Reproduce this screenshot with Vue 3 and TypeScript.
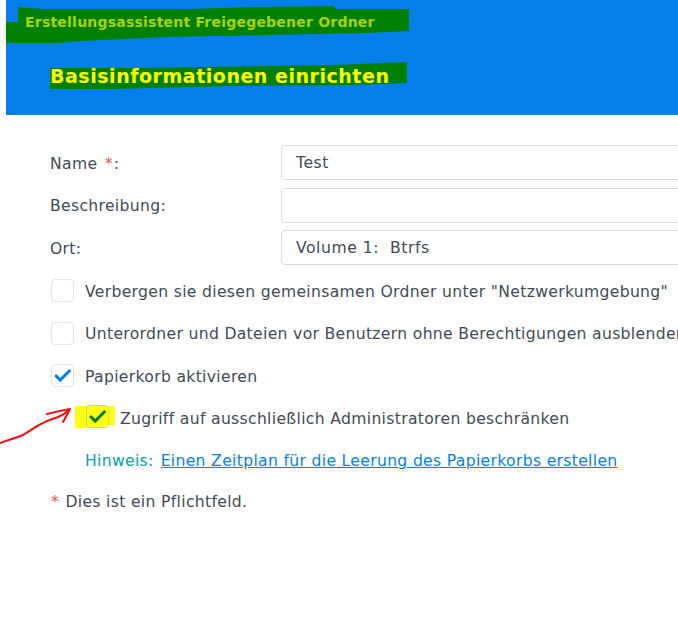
<script setup lang="ts">
interface FormRow {
  label: string
  value: string
  required?: boolean
}

const rows: FormRow[] = [
  { label: 'Name', value: 'Test', required: true },
  { label: 'Beschreibung', value: '' },
  { label: 'Ort', value: 'Volume 1:  Btrfs' }
]

const options = [
  { text: 'Verbergen sie diesen gemeinsamen Ordner unter "Netzwerkumgebung"', checked: false },
  { text: 'Unterordner und Dateien vor Benutzern ohne Berechtigungen ausblenden', checked: false },
  { text: 'Papierkorb aktivieren', checked: true }
]
</script>

<template>
  <div class="page">
    <!-- Header -->
    <header class="wizard-header">
      <svg class="scribble" width="672" height="115" viewBox="6 0 672 115">
        <polygon fill="#008000" points="18,7 43,9 187,9 257,7 333,6 337,9 409,9 409,31 367,33 267,35 167,37 82,41 58,43 6,43 6,22 18,22" />
        <polygon fill="#008000" points="50,68 137,68 333,65 407,62 407,83 353,85 233,86 113,89 50,89" />
      </svg>
      <div class="wizard-name">Erstellungsassistent Freigegebener Ordner</div>
      <h1 class="wizard-title">Basisinformationen einrichten</h1>
    </header>

    <!-- Form -->
    <section class="form">
      <div class="form-rows">
        <div v-for="row in rows" :key="row.label" class="form-row">
          <label class="form-label">{{ row.label }}{{ row.required ? ' ' : '' }}<span v-if="row.required" class="req">*</span>:</label>
          <div class="form-input">{{ row.value }}</div>
        </div>
      </div>

      <div class="options">
        <div v-for="option in options" :key="option.text" class="option">
          <span class="checkbox">
            <svg v-if="option.checked" width="23" height="23" viewBox="0 0 23 23">
              <path d="M3.5 11l5.5 5.5L20 5.5" fill="none" stroke="#057feb" stroke-width="3.2" />
            </svg>
          </span>
          <span class="option-text">{{ option.text }}</span>
        </div>

        <div class="option option-marked">
          <span class="marker"></span>
          <span class="checkbox checkbox-marked">
            <svg width="23" height="23" viewBox="0 0 23 23">
              <path d="M3.5 11l5.5 5.5L20 5.5" fill="none" stroke="#007a00" stroke-width="3.2" />
            </svg>
          </span>
          <span class="option-text">Zugriff auf ausschließlich Administratoren beschränken</span>
        </div>

        <div class="hint">
          <span class="hint-label">Hinweis:</span>
          <a href="#" class="hint-link">Einen Zeitplan für die Leerung des Papierkorbs erstellen</a>
        </div>
      </div>

      <p class="required-note"><span class="req">*</span> Dies ist ein Pflichtfeld.</p>
    </section>

    <!-- Red annotation arrow -->
    <svg class="arrow" width="80" height="50" viewBox="0 400 80 50">
      <path d="M0 443C8 440 16 438 23 435C30 431 36 426 43 423C48 420 53 419 58 417C63 415 67 412 70 409C68 413 66 417 63 422M70 409C64 410 55 412 47 414" fill="none" stroke="#ee1111" stroke-width="2" stroke-linecap="round" stroke-linejoin="round" />
    </svg>
  </div>
</template>

<style>
html, body {
  margin: 0;
  background: #fff;
  overflow: hidden;
}
</style>

<style scoped>
.page {
  position: relative;
  width: 678px;
  height: 642px;
  overflow: hidden;
  padding-left: 6px;
  box-sizing: border-box;
  background: #fff;
  font-family: "DejaVu Sans", sans-serif;
  font-size: 15.6px;
  letter-spacing: 0.33px;
  color: #414b55;
}

.wizard-header {
  position: relative;
  height: 115px;
  box-sizing: border-box;
  padding: 14px 0 0 19px;
  background: #057feb;
}

.scribble {
  position: absolute;
  top: 0;
  left: 0;
}

.wizard-name {
  position: relative;
  font-size: 14px;
  line-height: 17px;
  font-weight: 700;
  letter-spacing: 0.22px;
  color: #a8d400;
}

.wizard-title {
  position: relative;
  margin: 34px 0 0 25px;
  font-size: 19px;
  line-height: 23px;
  font-weight: 700;
  letter-spacing: 0.53px;
  color: #ffff00;
}

.form {
  padding: 30px 0 0 44px;
}

.form-rows {
  display: flex;
  flex-direction: column;
  gap: 7.5px;
}

.form-row {
  display: flex;
  align-items: center;
  height: 35px;
}

.form-label {
  width: 231px;
  flex: none;
  padding-top: 2px;
}

.form-label .req {
  margin: 0 1px 0 2px;
}

.req {
  color: #f0525a;
}

.form-input {
  width: 500px;
  height: 35px;
  flex: none;
  box-sizing: border-box;
  padding: 1px 14px 0;
  line-height: 33px;
  letter-spacing: 0.55px;
  white-space: pre;
  border: 1px solid #d5dfea;
  border-radius: 4px;
  background: #fff;
}

.options {
  margin-top: 14px;
  display: flex;
  flex-direction: column;
  gap: 19.5px;
}

.option {
  display: flex;
  align-items: center;
  height: 23px;
  white-space: nowrap;
  gap: 11px;
  margin-left: 1px;
}

.option-text {
  padding-top: 2px;
}

.checkbox {
  flex: none;
  width: 23px;
  height: 23px;
  box-sizing: border-box;
  border: 1px solid #dde5ee;
  border-radius: 4px;
  background: #fff;
  display: flex;
  align-items: center;
  justify-content: center;
}

.option-marked {
  position: relative;
  margin-left: 36px;
}

.marker {
  position: absolute;
  left: -11px;
  top: -1px;
  width: 40px;
  height: 23px;
  background: #ffff14;
  clip-path: polygon(0 0, 100% 0, 100% 87%, 30px 87%, 30px 92%, 0 100%);
}

.checkbox-marked {
  position: relative;
  background: transparent;
  border-color: #d6d86a;
  margin-top: -3px;
}

.hint {
  margin-left: 35px;
  margin-top: 3px;
  white-space: nowrap;
}

.hint-label {
  color: #00a3a3;
  margin-right: 7px;
}

.hint-link {
  color: #057feb;
  text-decoration: underline;
}

.required-note {
  margin: 23px 0 0 1px;
}

.required-note .req {
  margin-right: 1px;
}

.arrow {
  position: absolute;
  top: 400px;
  left: 0;
}
</style>
